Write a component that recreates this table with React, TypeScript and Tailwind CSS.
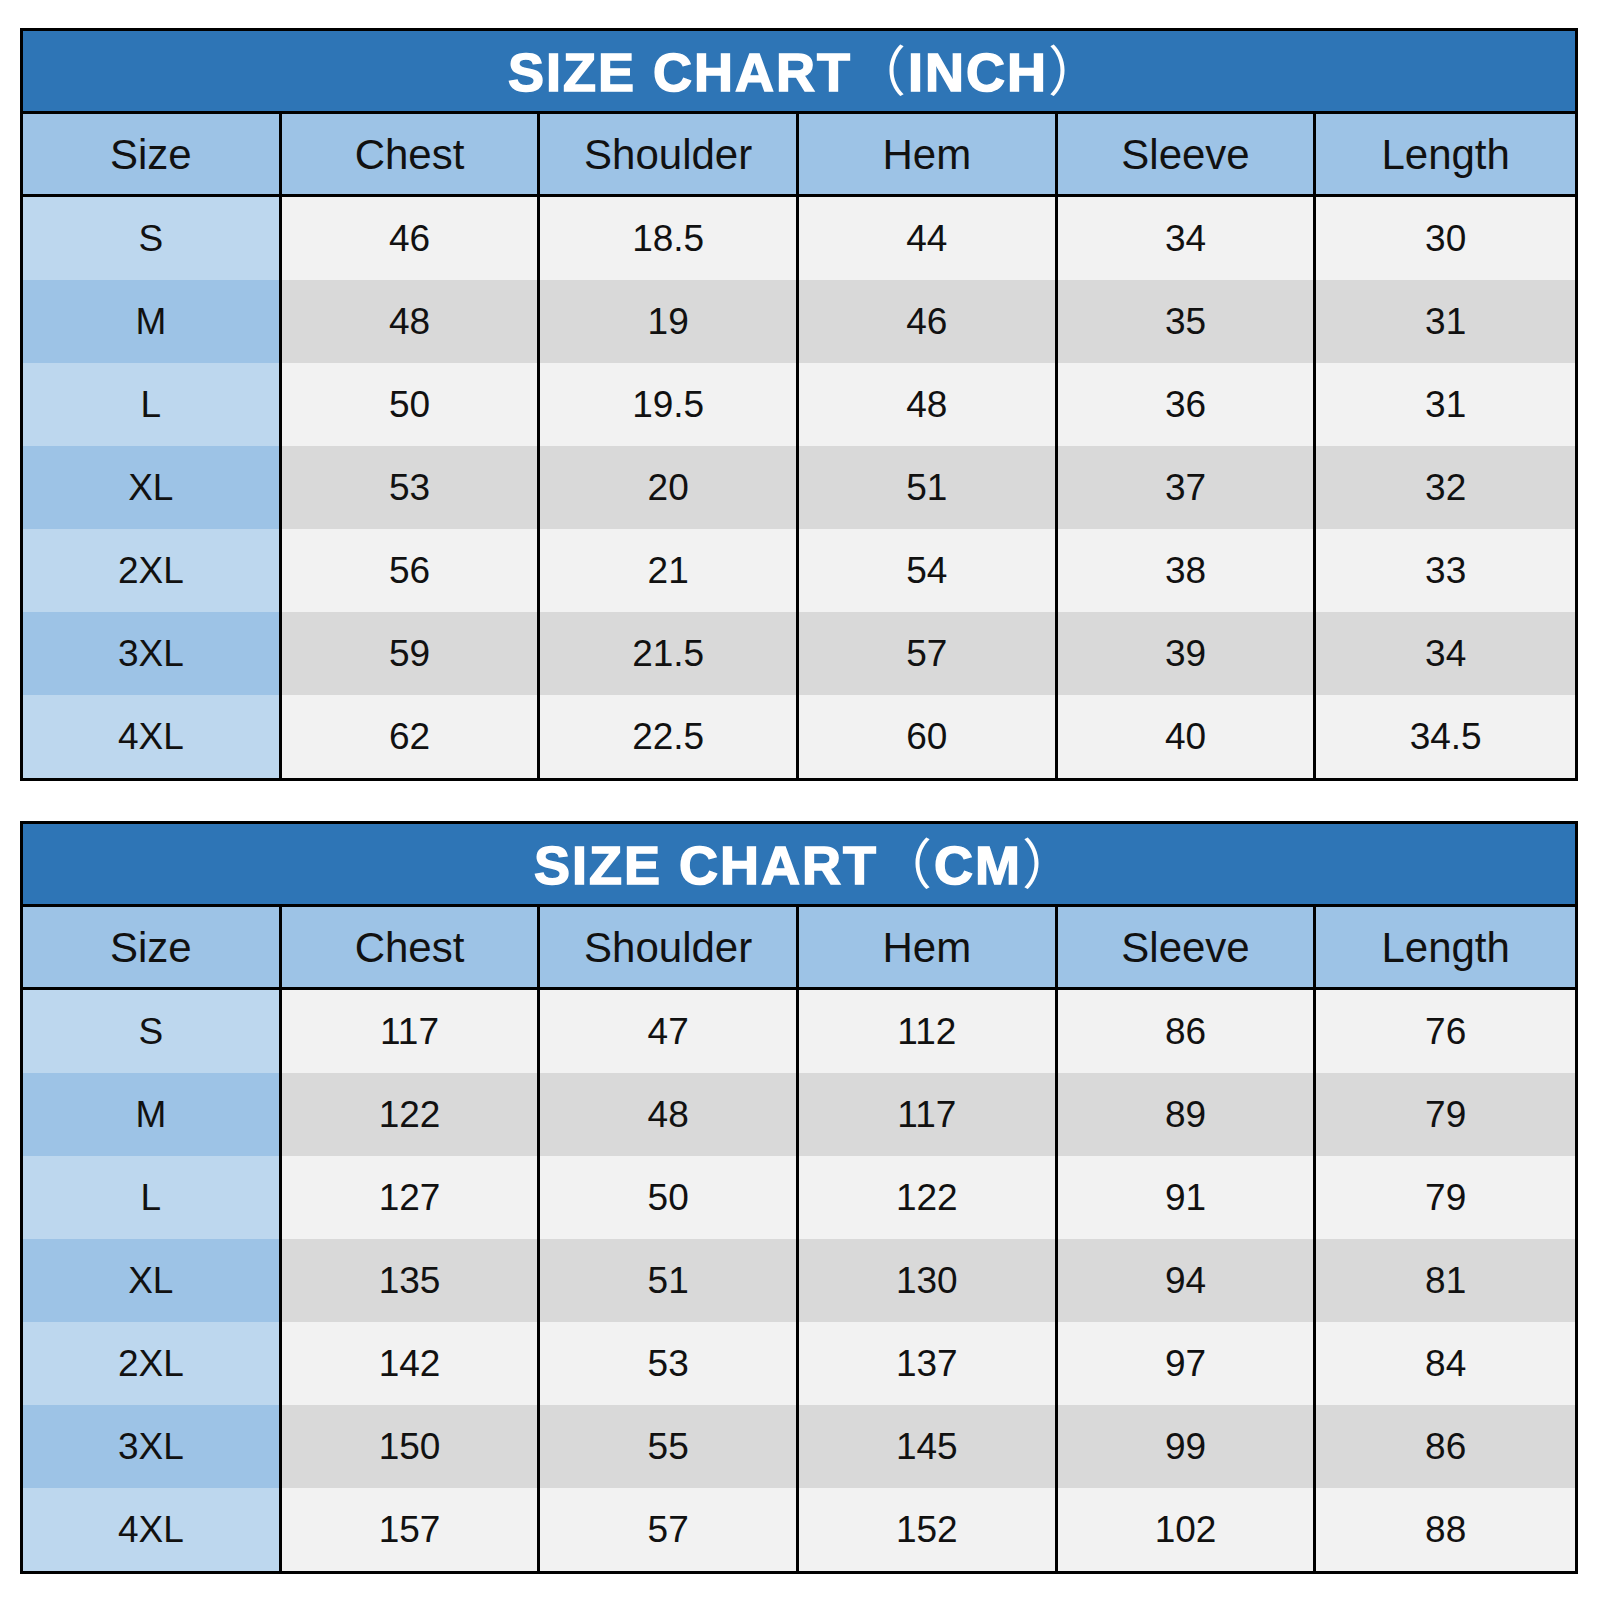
import React from "react";

const headers = ["Size", "Chest", "Shoulder", "Hem", "Sleeve", "Length"];

const inchRows = [
  ["S", "46", "18.5", "44", "34", "30"],
  ["M", "48", "19", "46", "35", "31"],
  ["L", "50", "19.5", "48", "36", "31"],
  ["XL", "53", "20", "51", "37", "32"],
  ["2XL", "56", "21", "54", "38", "33"],
  ["3XL", "59", "21.5", "57", "39", "34"],
  ["4XL", "62", "22.5", "60", "40", "34.5"],
];

const cmRows = [
  ["S", "117", "47", "112", "86", "76"],
  ["M", "122", "48", "117", "89", "79"],
  ["L", "127", "50", "122", "91", "79"],
  ["XL", "135", "51", "130", "94", "81"],
  ["2XL", "142", "53", "137", "97", "84"],
  ["3XL", "150", "55", "145", "99", "86"],
  ["4XL", "157", "57", "152", "102", "88"],
];

function Chart({ unit, rows }: { unit: string; rows: string[][] }) {
  return (
    <div className="w-[1558px] border-[3px] border-black">
      <div className="h-[83px] bg-[#2E75B6] border-b-[3px] border-black flex items-center justify-center">
        <div className="text-white text-[54px] leading-none font-bold tracking-[2px] pl-[14px] pt-[2px] font-['Liberation_Sans','Noto_Sans_CJK_SC',sans-serif]">
          <span className="[-webkit-text-stroke:1.5px_white]">SIZE CHART</span>
          <span className="font-normal">（</span>
          <span className="[-webkit-text-stroke:1.5px_white]">{unit}</span>
          <span className="font-normal">）</span>
        </div>
      </div>
      <div className="grid grid-cols-6 h-[83px] border-b-[3px] border-black bg-[#9DC3E6]">
        {headers.map((h, i) => (
          <div
            key={h}
            className={
              "flex items-center justify-center text-[42px] leading-none text-[#111] pt-[2px] font-['Liberation_Sans',Arial,sans-serif] " +
              (i < 5 ? "border-r-[3px] border-black" : "")
            }
          >
            {h}
          </div>
        ))}
      </div>
      {rows.map((r, ri) => {
        const dark = ri % 2 === 1;
        return (
          <div key={r[0]} className="grid grid-cols-6 h-[83px]">
            {r.map((v, ci) => (
              <div
                key={ci}
                className={
                  "flex items-center justify-center text-[37px] leading-none text-[#111] font-['Liberation_Sans',Arial,sans-serif] " +
                  (ci < 5 ? "border-r-[3px] border-black " : "") +
                  (ci === 0
                    ? dark
                      ? "bg-[#9DC3E6]"
                      : "bg-[#BDD7EE]"
                    : dark
                    ? "bg-[#D9D9D9]"
                    : "bg-[#F2F2F2]")
                }
              >
                {v}
              </div>
            ))}
          </div>
        );
      })}
    </div>
  );
}

export default function App() {
  return (
    <div className="w-[1600px] h-[1600px] bg-white pt-[28px] pl-[20px] flex flex-col gap-[40px]">
      <Chart unit="INCH" rows={inchRows} />
      <Chart unit="CM" rows={cmRows} />
    </div>
  );
}
